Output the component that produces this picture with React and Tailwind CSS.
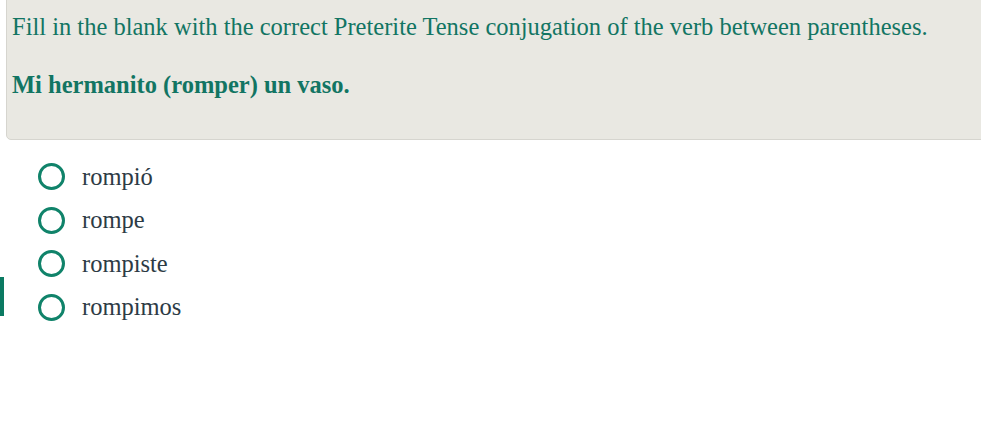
import React from 'react';

const options = ['rompió', 'rompe', 'rompiste', 'rompimos'];

export default function App() {
    return (
        <div className="w-[981px] h-[422px] bg-white overflow-hidden relative" style={{ fontFamily: '"Liberation Serif", serif' }}>
            {/* Question box */}
            <div className="ml-[6px] -mt-[10px] w-[990px] h-[150px] bg-[#e9e8e2] border border-[#d6d5cf] rounded-[5px] pl-[5px] pt-[22px]">
                <p className="text-[24.5px] leading-[28px] text-[#127563]">
                    Fill in the blank with the correct Preterite Tense conjugation of the verb between parentheses.
                </p>
                <p className="mt-[30px] text-[24.5px] leading-[28px] font-bold text-[#127563]">
                    Mi hermanito (romper) un vaso.
                </p>
            </div>

            {/* Answers */}
            <div className="relative mt-[15px] flex flex-col">
                {options.map((opt, i) => (
                    <div key={i} className="relative flex items-center h-[43.5px] pl-[38px]">
                        {i === 3 && <div className="absolute left-0 top-[-9px] w-[4px] h-[39px] bg-[#0b7a62]" />}
                        <span className="w-[27px] h-[27px] rounded-full border-[3.5px] border-[#10836a] box-border" />
                        <span className="ml-[17px] text-[24.5px] leading-[28px] text-[#2d3b45]">{opt}</span>
                    </div>
                ))}
            </div>
        </div>
    );
}
